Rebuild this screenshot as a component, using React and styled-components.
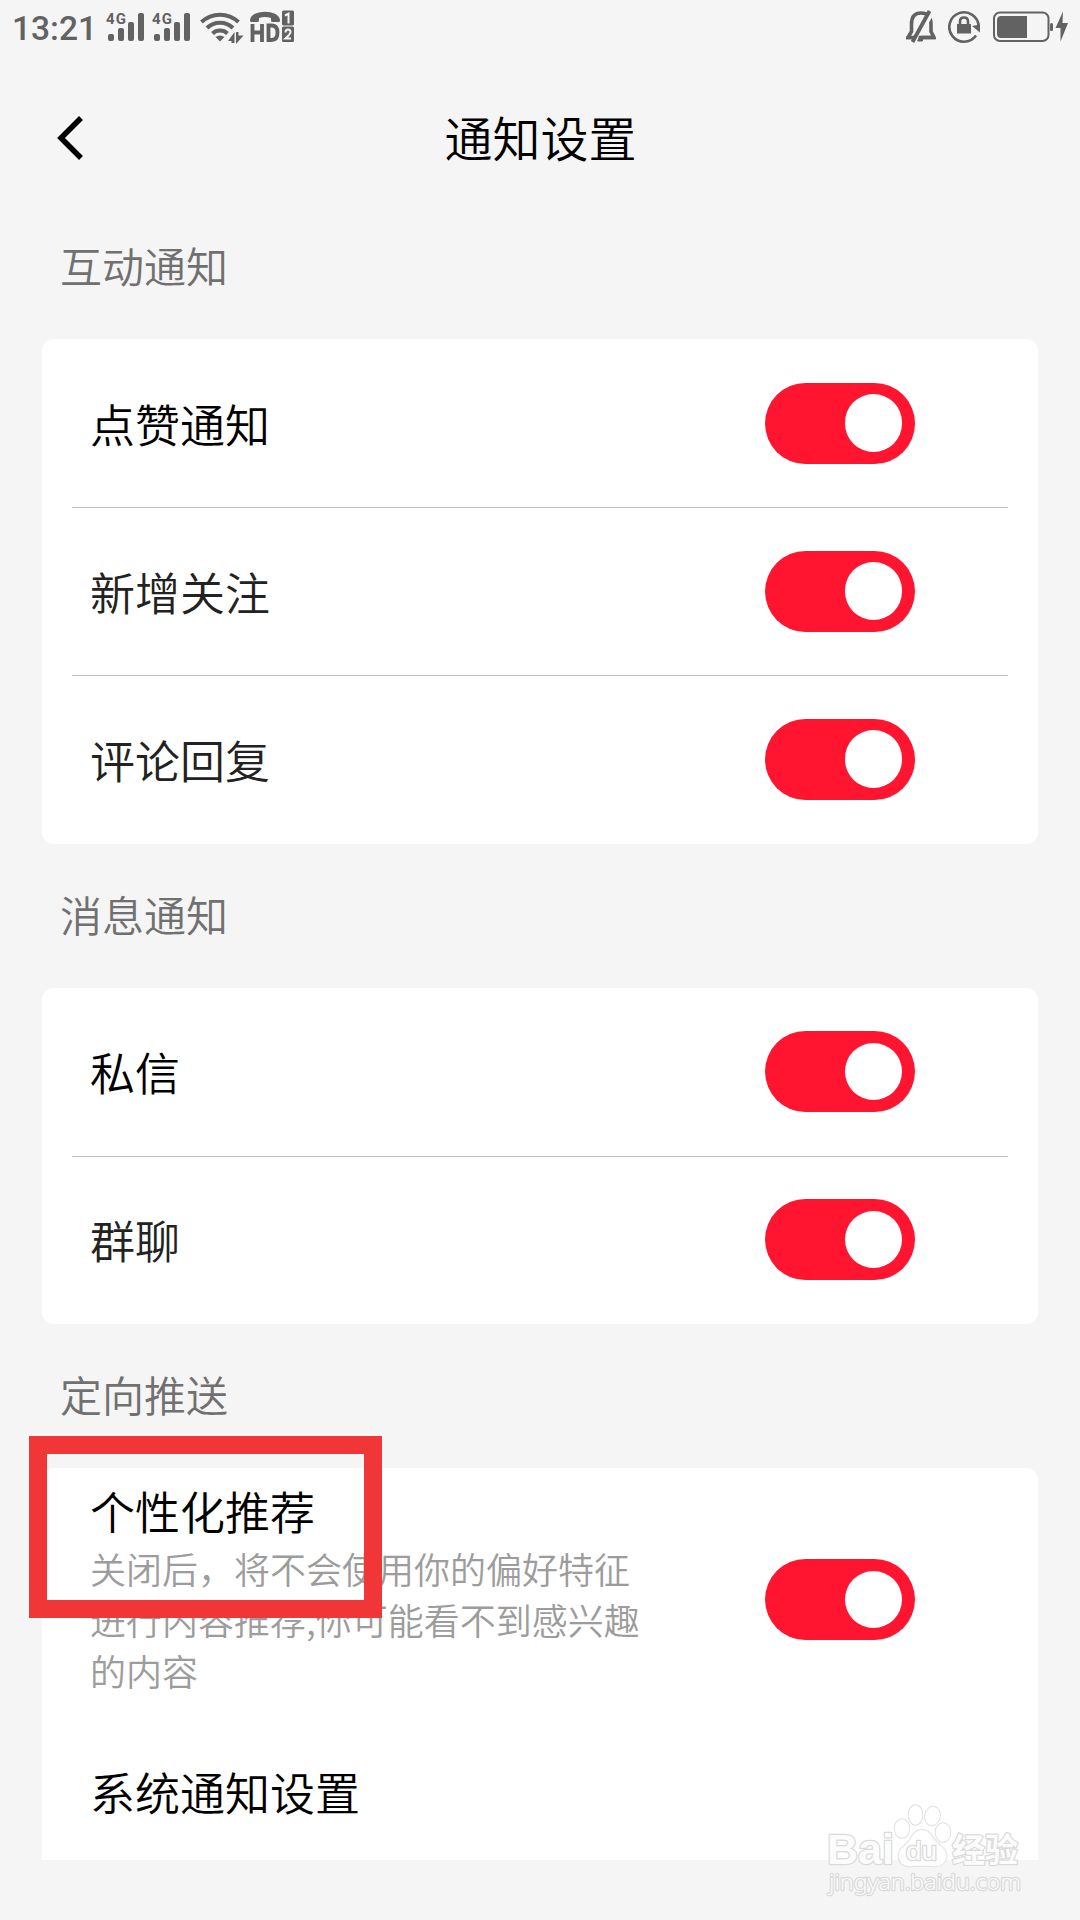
import styled, { createGlobalStyle } from 'styled-components'

const GREY = '#626262'
const PAGE = '#f5f5f5'

const sections = [
    {
        title: '互动通知',
        items: [
            { label: '点赞通知' },
            { label: '新增关注', soft: true },
            { label: '评论回复', soft: true },
        ],
    },
    {
        title: '消息通知',
        items: [
            { label: '私信' },
            { label: '群聊', soft: true },
        ],
    },
]

const Signal = () => (
    <Icon width="40" height="32" viewBox="0 0 40 32" $gap={6}>
        <text x="0" y="14" fontFamily="Roboto" fontWeight="700" fontSize="15" textLength="20">4G</text>
        <rect x="2" y="24" width="6" height="7" rx="2" />
        <rect x="12" y="18" width="6" height="13" rx="2" />
        <rect x="22" y="12" width="6" height="19" rx="2" />
        <rect x="32" y="3" width="6" height="28" rx="2" />
    </Icon>
)

const Wifi = () => (
    <Icon width="46" height="34" viewBox="-2 0 46 34" $gap={6}>
        <g fill="none" stroke={GREY} strokeWidth="4">
            <path d="M1.500 12 A27 27 0 0 1 38.500 12" />
            <path d="M7 18 A18.500 18.500 0 0 1 33 18" />
            <path d="M12.500 23.500 A11 11 0 0 1 27.500 23.500" />
        </g>
        <path d="M15.5 27 Q20 24 24.5 27 L20 31.5 Z" />
        <path d="M27 34 L34 23 V20 H38 L44 25 V34 Z" fill={PAGE} />
        <path d="M28 31 L34.500 22 V33 H31.500 V31 Z" />
        <path d="M36 22 H38.500 V25.500 H43.500 L36 34 Z" />
    </Icon>
)

const HdCall = () => (
    <Icon width="44" height="33" viewBox="0 0 44 33" $gap={0}>
        <path d="M0 10 C1 -1 29 -1 30 10 V11 Q30 12 28.500 12 H22.500 Q21 12 21 10.500 V8 Q15 6 9 8 V10.500 Q9 12 7.500 12 H1.500 Q0 12 0 10.500 Z" />
        <g fill="none" stroke={GREY} strokeWidth="3.800">
            <path d="M2.500 14 V32 M12 14 V32 M2.500 22.500 H12" />
            <path d="M18.500 15.500 H21.500 Q27.500 15.500 27.500 22.500 Q27.500 30 21.500 30 H18.500 Z" />
        </g>
        <rect x="32" y="0.500" width="12" height="15" rx="1.500" />
        <rect x="32" y="16.500" width="12" height="15.500" rx="1.500" />
        <g fill="none" stroke={PAGE} strokeWidth="2">
            <path d="M35 5.500 L38.500 3.700 V13.500" />
            <path d="M35.500 22.500 Q35.500 19.500 38 19.500 Q40.500 19.500 40.500 22 Q40.500 24 35.500 28.500 H41" />
        </g>
    </Icon>
)

const BellOff = () => (
    <Icon width="30" height="34" viewBox="0 0 30 34" $gap={12}>
        <g fill="none" stroke={GREY} strokeWidth="3.600">
            <path d="M2 27.500 H28 L25 21.500 V14 Q25 3 15 3 Q5.500 3 5.500 14 V21.500 Z" />
            <path d="M9 31.500 L24.500 5" stroke={PAGE} strokeWidth="5" />
            <path d="M6.500 32 L23.500 1" strokeWidth="3.800" />
        </g>
        <path d="M0 26.500 H9.500 L8 29.200 H0 Z M12 29.200 H17 V31 Q14 32 11 31 Z M13 25.700 H29 V29.300 H12 Z" />
    </Icon>
)

const RotateLock = () => (
    <Icon width="33" height="33" viewBox="0 0 33 33" $gap={12}>
        <path d="M28 25.500 A14.700 14.700 0 1 1 30.700 16.500" fill="none" stroke={GREY} strokeWidth="2.600" />
        <path d="M24 16 L32 14.500 V22.500 Z" />
        <rect x="9" y="14" width="14" height="9.500" />
        <path d="M12 15 V11.500 Q12 7.500 16 7.500 Q20 7.500 20 11.500 V15" fill="none" stroke={GREY} strokeWidth="2.600" />
    </Icon>
)

const Battery = () => (
    <Icon width="76" height="33" viewBox="0 -1 76 33" $gap={0}>
        <rect x="1" y="1.500" width="54.500" height="28.500" rx="6" fill="none" stroke={GREY} strokeWidth="2" />
        <path d="M8 5 H34 V27 H8 Q4 27 4 22.500 V9.500 Q4 5 8 5 Z" />
        <rect x="57" y="12" width="3" height="8" rx="1.500" />
        <path d="M70 0.500 L62.500 17 H67.500 L67.500 30.500 L75 12 H69.500 Z" />
    </Icon>
)

const BackIcon = () => (
    <svg width="32" height="46" viewBox="0 0 32 46">
        <path d="M27 3 L7 23 L27 43" fill="none" stroke="#000" strokeWidth="5.500" />
    </svg>
)

const BaiduMark = () => (
    <svg width="210" height="100" viewBox="0 0 210 100">
        <g fill="#fff" fillOpacity="0.800" stroke="#dcdcdc" strokeWidth="1.500" paintOrder="stroke">
            <ellipse cx="82" cy="28.500" rx="7.500" ry="9.500" />
            <ellipse cx="95.500" cy="15" rx="7" ry="10" />
            <ellipse cx="112.500" cy="16" rx="7.500" ry="9.500" transform="rotate(12 112.500 16)" />
            <ellipse cx="123" cy="32.500" rx="7.500" ry="9.500" />
            <path d="M102 29.500 Q108 29.500 112 36 Q115 41 121 46 Q127 51 126.500 57 Q125 66 115 66.500 Q102 65 90 66.500 Q79 66 78.500 56 Q78.500 50 84 46 Q89 42 92 36 Q96 29.500 102 29.500 Z" />
        </g>
        <g fill="#fcfcfc" stroke="#dadada" strokeWidth="2.500" paintOrder="stroke" strokeLinejoin="round">
            <text x="7" y="64" fontFamily="Liberation Sans" fontWeight="700" fontSize="43" textLength="67" lengthAdjust="spacingAndGlyphs">Bai</text>
            <text x="86" y="60" fontFamily="Liberation Sans" fontSize="26" textLength="31" lengthAdjust="spacingAndGlyphs">du</text>
            <text x="132" y="62" fontFamily="Noto Sans CJK SC" fontWeight="700" fontSize="33" textLength="66">经验</text>
            <text x="9" y="90" fontFamily="Noto Sans" fontSize="22.500" textLength="192" lengthAdjust="spacingAndGlyphs">jingyan.baidu.com</text>
        </g>
    </svg>
)

const Switch = () => (
    <Track role="switch" aria-checked="true">
        <Knob />
    </Track>
)

const Section = ({ title, items }) => (
    <>
        <SectionTitle>{title}</SectionTitle>
        <Card>
            {items.map(item => (
                <Row key={item.label}>
                    <Label $soft={item.soft}>{item.label}</Label>
                    <Switch />
                </Row>
            ))}
        </Card>
    </>
)

const App = () => {
    return (
        <Screen>
            <GlobalStyle />
            <StatusBar>
                <Time>13:21</Time>
                <Signal />
                <Signal />
                <Wifi />
                <HdCall />
                <Spacer />
                <BellOff />
                <RotateLock />
                <Battery />
            </StatusBar>
            <Header>
                <BackIcon />
                <Title>通知设置</Title>
            </Header>
            {sections.map(s => <Section key={s.title} {...s} />)}
            <SectionTitle>定向推送</SectionTitle>
            <PushCard>
                <PushRow>
                    <PushText>
                        <Label>个性化推荐</Label>
                        <Hint>
                            关闭后，将不会使用你的偏好特征<br />
                            进行内容推荐,你可能看不到感兴趣<br />
                            的内容
                        </Hint>
                    </PushText>
                    <Switch />
                </PushRow>
                <SystemRow>
                    <Label>系统通知设置</Label>
                </SystemRow>
                <Highlight />
            </PushCard>
            <Watermark>
                <BaiduMark />
            </Watermark>
        </Screen>
    )
}

const GlobalStyle = createGlobalStyle`
    body {
        margin: 0;
        background: ${PAGE};
    }
    * {
        box-sizing: border-box;
    }
`

const Screen = styled.div`
    position: relative;
    width: 1080px;
    height: 1920px;
    overflow: hidden;
    background: ${PAGE};
    font-family: "Noto Sans CJK SC", sans-serif;
    font-weight: 350;
    color: #000;
`

const StatusBar = styled.div`
    display: flex;
    height: 56px;
    padding: 10px 11px 0 12px;
    color: ${GREY};
`

const Time = styled.div`
    width: 94px;
    padding-top: 1px;
    font-family: Roboto, sans-serif;
    font-size: 33.5px;
    font-weight: 500;
    line-height: 36px;
`

const Icon = styled.svg`
    flex: none;
    fill: ${GREY};
    margin-right: ${p => p.$gap}px;
`

const Spacer = styled.div`
    flex: 1;
`

const Header = styled.div`
    display: flex;
    align-items: center;
    height: 139px;
    padding: 25px 85px 0 54px;
`

const Title = styled.div`
    flex: 1;
    padding-bottom: 5px;
    font-size: 48px;
    line-height: 70px;
    text-align: center;
`

const SectionTitle = styled.div`
    display: flex;
    align-items: center;
    height: 144px;
    padding: 0 60px 5px;
    font-size: 42px;
    color: #707070;
`

const Card = styled.div`
    margin: 0 42px;
    padding: 0 30px 0.5px;
    border-radius: 12px;
    background: #fff;
`

const Row = styled.div`
    display: flex;
    align-items: center;
    justify-content: space-between;
    height: 168px;
    padding: 0 93px 0 18px;
    & + & {
        background: linear-gradient(#c2c2c2, #c2c2c2) top / 100% 1px no-repeat;
    }
`

const Label = styled.div`
    font-size: 45px;
    line-height: 67px;
    color: ${p => p.$soft ? '#222' : '#000'};
`

const Track = styled.div`
    display: flex;
    align-items: center;
    justify-content: flex-end;
    flex: none;
    width: 150px;
    height: 81px;
    padding-right: 13px;
    border-radius: 41px;
    background: #ff1530;
`

const Knob = styled.div`
    width: 57.5px;
    height: 57.5px;
    border-radius: 50%;
    background: #fff;
`

const PushCard = styled.div`
    position: relative;
    height: 392px;
    margin: 0 42px;
    border-radius: 12px 12px 0 0;
    background: #fff;
`

const PushRow = styled.div`
    display: flex;
    align-items: center;
    justify-content: space-between;
    height: 263px;
    padding: 0 123px 0 48px;
`

const PushText = styled.div`
    padding-bottom: 27px;
`

const Hint = styled.div`
    margin-top: -1px;
    font-size: 36px;
    line-height: 51px;
    white-space: nowrap;
    color: #9c9c9c;
`

const SystemRow = styled.div`
    display: flex;
    align-items: center;
    height: 121px;
    padding: 0 48px;
`

const Highlight = styled.div`
    position: absolute;
    left: -13px;
    top: -32.5px;
    width: 352.5px;
    height: 182px;
    border: 18px solid #f03636;
`

const Watermark = styled.div`
    position: absolute;
    left: 820px;
    top: 1800px;
    line-height: 0;
`

export default App
